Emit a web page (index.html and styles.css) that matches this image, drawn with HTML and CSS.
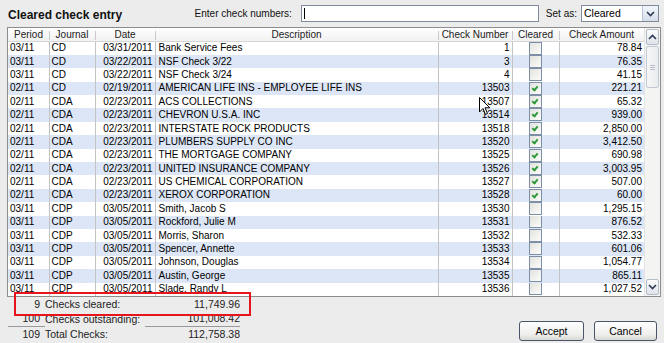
FILE: index.html
```html
<!DOCTYPE html>
<html>
<head>
<meta charset="utf-8">
<title>Cleared check entry</title>
<link rel="stylesheet" href="styles.css">
</head>
<body>
<div class="window">
	<div class="topbar">
		<div class="title">Cleared check entry</div>
		<label class="lbl lbl-enter" for="checknums">Enter check numbers:</label>
		<div class="textbox" id="checknums"><span class="caret"></span></div>
		<span class="lbl lbl-set">Set as:</span>
		<div class="combo">
			<span class="combo-text">Cleared</span>
			<span class="combo-btn"><svg width="9" height="6" viewBox="0 0 9 6"><path d="M1 1 L4.5 4.5 L8 1" fill="none" stroke="#2c3a55" stroke-width="1.6"/></svg></span>
		</div>
	</div>

	<div class="grid">
		<div class="grid-body">
			<table class="checks">
				<colgroup>
					<col style="width:41px"><col style="width:46px"><col style="width:60px"><col style="width:283px"><col style="width:74px"><col style="width:47px"><col style="width:85px">
				</colgroup>
				<thead>
					<tr><th>Period</th><th>Journal</th><th>Date</th><th>Description</th><th>Check Number</th><th>Cleared</th><th>Check Amount</th></tr>
				</thead>
				<tbody>
					<tr><td>03/11</td><td>CD</td><td class="r">03/31/2011</td><td class="desc">Bank Service Fees</td><td class="r">1</td><td class="c"><span class="chk"></span></td><td class="r">78.84</td></tr>
					<tr class="alt"><td>03/11</td><td>CD</td><td class="r">03/22/2011</td><td class="desc">NSF Check 3/22</td><td class="r">3</td><td class="c"><span class="chk"></span></td><td class="r">76.35</td></tr>
					<tr><td>03/11</td><td>CD</td><td class="r">03/22/2011</td><td class="desc">NSF Check 3/24</td><td class="r">4</td><td class="c"><span class="chk"></span></td><td class="r">41.15</td></tr>
					<tr class="alt"><td>02/11</td><td>CD</td><td class="r">02/19/2011</td><td class="desc">AMERICAN LIFE INS - EMPLOYEE LIFE INS</td><td class="r">13503</td><td class="c"><span class="chk on"></span></td><td class="r">221.21</td></tr>
					<tr><td>02/11</td><td>CDA</td><td class="r">02/23/2011</td><td class="desc">ACS COLLECTIONS</td><td class="r">13507</td><td class="c"><span class="chk on"></span></td><td class="r">65.32</td></tr>
					<tr class="alt"><td>02/11</td><td>CDA</td><td class="r">02/23/2011</td><td class="desc">CHEVRON U.S.A. INC</td><td class="r">13514</td><td class="c"><span class="chk on"></span></td><td class="r">939.00</td></tr>
					<tr><td>02/11</td><td>CDA</td><td class="r">02/23/2011</td><td class="desc">INTERSTATE ROCK PRODUCTS</td><td class="r">13518</td><td class="c"><span class="chk on"></span></td><td class="r">2,850.00</td></tr>
					<tr class="alt"><td>02/11</td><td>CDA</td><td class="r">02/23/2011</td><td class="desc">PLUMBERS SUPPLY CO INC</td><td class="r">13520</td><td class="c"><span class="chk on"></span></td><td class="r">3,412.50</td></tr>
					<tr><td>02/11</td><td>CDA</td><td class="r">02/23/2011</td><td class="desc">THE MORTGAGE COMPANY</td><td class="r">13525</td><td class="c"><span class="chk on"></span></td><td class="r">690.98</td></tr>
					<tr class="alt"><td>02/11</td><td>CDA</td><td class="r">02/23/2011</td><td class="desc">UNITED INSURANCE COMPANY</td><td class="r">13526</td><td class="c"><span class="chk on"></span></td><td class="r">3,003.95</td></tr>
					<tr><td>02/11</td><td>CDA</td><td class="r">02/23/2011</td><td class="desc">US CHEMICAL CORPORATION</td><td class="r">13527</td><td class="c"><span class="chk on"></span></td><td class="r">507.00</td></tr>
					<tr class="alt"><td>02/11</td><td>CDA</td><td class="r">02/23/2011</td><td class="desc">XEROX CORPORATION</td><td class="r">13528</td><td class="c"><span class="chk on"></span></td><td class="r">60.00</td></tr>
					<tr><td>03/11</td><td>CDP</td><td class="r">03/05/2011</td><td class="desc">Smith, Jacob S</td><td class="r">13530</td><td class="c"><span class="chk"></span></td><td class="r">1,295.15</td></tr>
					<tr class="alt"><td>03/11</td><td>CDP</td><td class="r">03/05/2011</td><td class="desc">Rockford, Julie M</td><td class="r">13531</td><td class="c"><span class="chk"></span></td><td class="r">876.52</td></tr>
					<tr><td>03/11</td><td>CDP</td><td class="r">03/05/2011</td><td class="desc">Morris, Sharon</td><td class="r">13532</td><td class="c"><span class="chk"></span></td><td class="r">532.33</td></tr>
					<tr class="alt"><td>03/11</td><td>CDP</td><td class="r">03/05/2011</td><td class="desc">Spencer, Annette</td><td class="r">13533</td><td class="c"><span class="chk"></span></td><td class="r">601.06</td></tr>
					<tr><td>03/11</td><td>CDP</td><td class="r">03/05/2011</td><td class="desc">Johnson, Douglas</td><td class="r">13534</td><td class="c"><span class="chk"></span></td><td class="r">1,054.77</td></tr>
					<tr class="alt"><td>03/11</td><td>CDP</td><td class="r">03/05/2011</td><td class="desc">Austin, George</td><td class="r">13535</td><td class="c"><span class="chk"></span></td><td class="r">865.11</td></tr>
					<tr><td>03/11</td><td>CDP</td><td class="r">03/05/2011</td><td class="desc">Slade, Randy L</td><td class="r">13536</td><td class="c"><span class="chk"></span></td><td class="r">1,027.52</td></tr>
				</tbody>
			</table>
			<svg class="cursor" width="12" height="19" viewBox="0 0 12 19"><path d="M0.5 0.5 L0.5 15 L4 11.5 L6.5 17.5 L8.5 16.5 L6 10.8 L10.8 10.8 Z" fill="#fff" stroke="#000" stroke-width="1"/></svg>
		</div>
		<div class="vscroll">
			<div class="sb-btn"><svg width="9" height="6" viewBox="0 0 9 6"><path d="M1 5 L4.5 1.5 L8 5" fill="none" stroke="#2c3a55" stroke-width="1.6"/></svg></div>
			<div class="sb-thumb"><span class="grip"></span></div>
			<div class="sb-track"></div>
			<div class="sb-btn"><svg width="9" height="6" viewBox="0 0 9 6"><path d="M1 1 L4.5 4.5 L8 1" fill="none" stroke="#2c3a55" stroke-width="1.6"/></svg></div>
		</div>
	</div>

	<div class="footer">
		<table class="totals">
			<tr class="hl"><td class="n">9</td><td class="t">Checks cleared:</td><td class="a">11,749.96</td></tr>
			<tr class="sum"><td class="n">100</td><td class="t">Checks outstanding:</td><td class="a">101,008.42</td></tr>
			<tr><td class="n">109</td><td class="t">Total Checks:</td><td class="a">112,758.38</td></tr>
		</table>
		<div class="buttons">
			<div class="btn">Accept</div>
			<div class="btn">Cancel</div>
		</div>
	</div>
	<div class="redbox"></div>
</div>
</body>
</html>
```

FILE: styles.css
```css
html, body {
	margin: 0;
	padding: 0;
}
body {
	font-family: "Liberation Sans", Arial, sans-serif;
	font-size: 10px;
	color: #000;
	background-color: #ececec;
}
div.window {
	width: 664px;
	height: 343px;
	position: relative;
	overflow: hidden;
}

/* top bar */
div.topbar {
	height: 27px;
	display: flex;
	align-items: center;
	padding-left: 8px;
	box-sizing: border-box;
}
div.title {
	font-size: 12px;
	font-weight: bold;
	flex: 1;
	padding-top: 2px;
	color: #111;
}
.lbl {
	font-size: 10px;
	color: #111;
}
.lbl-enter {
	margin-right: 9px;
}
div.textbox {
	width: 238px;
	height: 17px;
	box-sizing: border-box;
	border: 1px solid #7f8b9b;
	background-color: #fff;
	position: relative;
}
span.caret {
	display: block;
	width: 1px;
	height: 11px;
	background-color: #000;
	margin: 2px 0 0 2px;
}
.lbl-set {
	margin-left: 7px;
	margin-right: 4px;
}
div.combo {
	width: 78px;
	height: 17px;
	box-sizing: border-box;
	border: 1px solid #7f8b9b;
	background-color: #fff;
	display: flex;
	margin-right: 5px;
}
span.combo-text {
	flex: 1;
	font-size: 10.5px;
	line-height: 14px;
	padding-left: 2px;
}
span.combo-btn {
	width: 15px;
	display: flex;
	align-items: center;
	justify-content: center;
	background: linear-gradient(#f2f5fb, #d6deea);
	border-left: 1px solid #b9c3d3;
}

/* grid */
div.grid {
	margin-left: 7px;
	width: 654px;
	height: 270px;
	box-sizing: border-box;
	border: 1px solid #8d8d8d;
	background-color: #fff;
	display: flex;
}
div.grid-body {
	flex: 1;
	overflow: hidden;
	position: relative;
}
table.checks {
	border-collapse: collapse;
	table-layout: fixed;
	width: 636px;
}
table.checks th {
	height: 13px;
	padding: 0;
	font-weight: normal;
	color: #222;
	text-align: center;
	background: linear-gradient(#ffffff, #f1f1f1);
	border-bottom: 1px solid #d5d5d5;
	position: relative;
	white-space: nowrap;
}
table.checks th + th::before {
	content: "";
	position: absolute;
	left: 0;
	top: 3px;
	height: 9px;
	border-left: 1px solid #c9c9c9;
}
table.checks tbody tr {
	height: 13.4px;
}
table.checks td {
	padding: 0 3px 0 2px;
	line-height: 12px;
	white-space: nowrap;
	overflow: hidden;
	border-right: 1px solid #c3c3c3;
}
table.checks td:last-child {
	border-right: none;
}
table.checks td.desc {
	padding-left: 3px;
}
table.checks td.r {
	text-align: right;
	padding-right: 2px;
}
table.checks td.c {
	text-align: center;
	padding: 0;
}
table.checks tr.alt td {
	background-color: #dce6f6;
}
span.chk {
	display: inline-block;
	width: 11px;
	height: 11px;
	border: 1px solid #7d8fa6;
	background: linear-gradient(135deg, #e2e2dd, #fcfcfb);
	vertical-align: middle;
	margin-top: -1px;
	position: relative;
}
span.chk.on::after {
	content: "";
	position: absolute;
	left: 3px;
	top: 2px;
	width: 2px;
	height: 4px;
	border: solid #2f9a3b;
	border-width: 0 2px 2px 0;
	transform: rotate(40deg);
}
svg.cursor {
	position: absolute;
	left: 471px;
	top: 69px;
}

/* scrollbar */
div.vscroll {
	width: 16px;
	display: flex;
	flex-direction: column;
	background-color: #f4f4f2;
	border-left: 1px solid #e4e4e4;
	box-sizing: border-box;
}
div.sb-btn {
	height: 14px;
	margin: 1px;
	border: 1px solid #b3bcc9;
	border-radius: 2px;
	background: linear-gradient(#fbfbfb, #dfe3ea);
	display: flex;
	align-items: center;
	justify-content: center;
}
div.sb-thumb {
	height: 40px;
	margin: 0 1px;
	border: 1px solid #c2c9d3;
	border-radius: 2px;
	background: linear-gradient(90deg, #f7f7f7, #e9ebee);
	display: flex;
	align-items: center;
	justify-content: center;
}
span.grip {
	width: 5px;
	height: 5px;
	border-top: 1px solid #b8bec8;
	border-bottom: 1px solid #b8bec8;
	box-sizing: border-box;
	position: relative;
}
span.grip::after {
	content: "";
	position: absolute;
	left: 0;
	right: 0;
	top: 1px;
	border-top: 1px solid #b8bec8;
}
div.sb-track {
	flex: 1;
}

/* footer */
div.footer {
	display: flex;
	justify-content: space-between;
	align-items: flex-end;
}
table.totals {
	border-collapse: collapse;
	margin-left: 8px;
	font-size: 10.5px;
	color: #222;
}
table.totals td {
	padding: 0;
	height: 14.5px;
	line-height: 13px;
}
table.totals td.n {
	width: 32px;
	text-align: right;
	padding-right: 5px;
}
table.totals td.t {
	width: 100px;
}
table.totals td.a {
	width: 95px;
	text-align: right;
}
table.totals tr.sum td.n, table.totals tr.sum td.a {
	border-bottom: 1px solid #9a9a9a;
}
div.buttons {
	display: flex;
	gap: 10px;
	margin-right: 7px;
	margin-bottom: 1px;
}
div.btn {
	height: 20px;
	box-sizing: border-box;
	border: 1px solid #4a5668;
	border-radius: 3px;
	background: linear-gradient(#ffffff, #eeeeec 70%, #d8d8d4);
	font-size: 10.5px;
	line-height: 18px;
	text-align: center;
}
div.btn:first-child {
	width: 65px;
}
div.btn:last-child {
	width: 63px;
}

/* highlight annotation */
div.redbox {
	position: absolute;
	left: 14px;
	top: 292px;
	width: 237px;
	height: 24px;
	box-sizing: border-box;
	border: 2px solid #e8141b;
}
```
